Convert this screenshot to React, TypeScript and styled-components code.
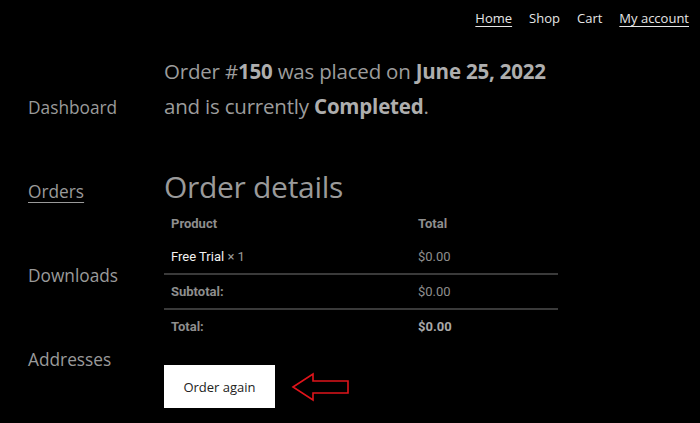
import React from 'react'
import styled, { createGlobalStyle } from 'styled-components'

const GlobalStyle = createGlobalStyle`
  html, body {
    margin: 0;
    padding: 0;
    background: #000;
  }
  body {
    font-family: "Open Sans", "Liberation Sans", sans-serif;
    color: #9c9c9c;
  }
`

const Page = styled.div`
  width: 700px;
  height: 423px;
  overflow: hidden;
  background: #000;
`

const TopNav = styled.nav`
  display: flex;
  justify-content: flex-end;
  gap: 17px;
  padding: 9px 11px 0 0;
  height: 22px;
`

const NavLink = styled.a<{ active?: boolean }>`
  font-size: 13px;
  color: #e6e6e6;
  text-decoration: ${p => (p.active ? 'underline' : 'none')};
  text-underline-offset: 3px;
`

const Body = styled.div`
  display: flex;
`

const Sidebar = styled.ul`
  list-style: none;
  margin: 0;
  padding: 64px 0 0 28px;
  width: 136px;
  display: flex;
  flex-direction: column;
  gap: 58px;
`

const SideItem = styled.li<{ active?: boolean }>`
  font-size: 17.3px;
  line-height: 26px;
  color: #9a9a9a;
  text-decoration: ${p => (p.active ? 'underline' : 'none')};
  text-underline-offset: 4px;
  text-decoration-thickness: 1px;
`

const Main = styled.main`
  width: 394px;
  padding-top: 23px;
`

const Notice = styled.p`
  margin: 0;
  font-size: 20.5px;
  line-height: 35px;
  color: #9c9c9c;
  letter-spacing: -0.2px;

  b {
    color: #aeaeae;
  }
`

const Heading = styled.h2`
  margin: 45px 0 0;
  font-size: 30px;
  font-weight: 400;
  line-height: 36px;
  color: #9a9a9a;
  letter-spacing: -0.3px;
`

const Table = styled.table`
  width: 100%;
  border-collapse: collapse;
  font-family: Roboto, "Liberation Sans", sans-serif;
  font-size: 13px;
  margin-top: 2px;
`

const Cell = styled.td<{ head?: boolean; strong?: boolean; light?: boolean }>`
  padding: 0 7px;
  height: 33px;
  text-align: left;
  font-weight: ${p => (p.head || p.strong ? 700 : 400)};
  color: ${p => (p.light ? '#f2f2f2' : p.strong ? '#a8a8a8' : '#8e8e8e')};
  &:first-child {
    width: 233px;
  }
`

const Row = styled.tr<{ divider?: boolean }>`
  border-bottom: ${p => (p.divider ? '2px solid #3a3a3a' : 'none')};
`

const Qty = styled.span`
  font-weight: 400;
  color: #9a9a9a;
`

const Actions = styled.div`
  display: flex;
  align-items: center;
  gap: 16px;
  margin-top: 22px;
`

const OrderButton = styled.button`
  width: 111px;
  height: 43px;
  background: #fff;
  border: none;
  font-family: "Open Sans", "Liberation Sans", sans-serif;
  font-size: 13px;
  color: #222;
  padding: 0;
`

const Arrow = () => (
  <svg width="60" height="32" viewBox="0 0 60 32">
    <path
      d="M2 16 L22 3 L22 10 L57 10 L57 22 L22 22 L22 29 Z"
      fill="none"
      stroke="#e0141b"
      strokeWidth="1.6"
      strokeLinejoin="miter"
    />
  </svg>
)

export default function App() {
  return (
    <Page>
      <GlobalStyle />
      <TopNav>
        <NavLink active>Home</NavLink>
        <NavLink>Shop</NavLink>
        <NavLink>Cart</NavLink>
        <NavLink active>My account</NavLink>
      </TopNav>
      <Body>
        <Sidebar>
          <SideItem>Dashboard</SideItem>
          <SideItem active>Orders</SideItem>
          <SideItem>Downloads</SideItem>
          <SideItem>Addresses</SideItem>
        </Sidebar>
        <Main>
          <Notice>
            Order #<b>150</b> was placed on <b>June 25, 2022</b> and is currently <b>Completed</b>.
          </Notice>
          <Heading>Order details</Heading>
          <Table>
            <tbody>
              <Row>
                <Cell head>Product</Cell>
                <Cell head>Total</Cell>
              </Row>
              <Row divider>
                <Cell light>
                  Free Trial <Qty>× 1</Qty>
                </Cell>
                <Cell>$0.00</Cell>
              </Row>
              <Row divider>
                <Cell head>Subtotal:</Cell>
                <Cell>$0.00</Cell>
              </Row>
              <Row>
                <Cell head>Total:</Cell>
                <Cell strong>$0.00</Cell>
              </Row>
            </tbody>
          </Table>
          <Actions>
            <OrderButton>Order again</OrderButton>
            <Arrow />
          </Actions>
        </Main>
      </Body>
    </Page>
  )
}
